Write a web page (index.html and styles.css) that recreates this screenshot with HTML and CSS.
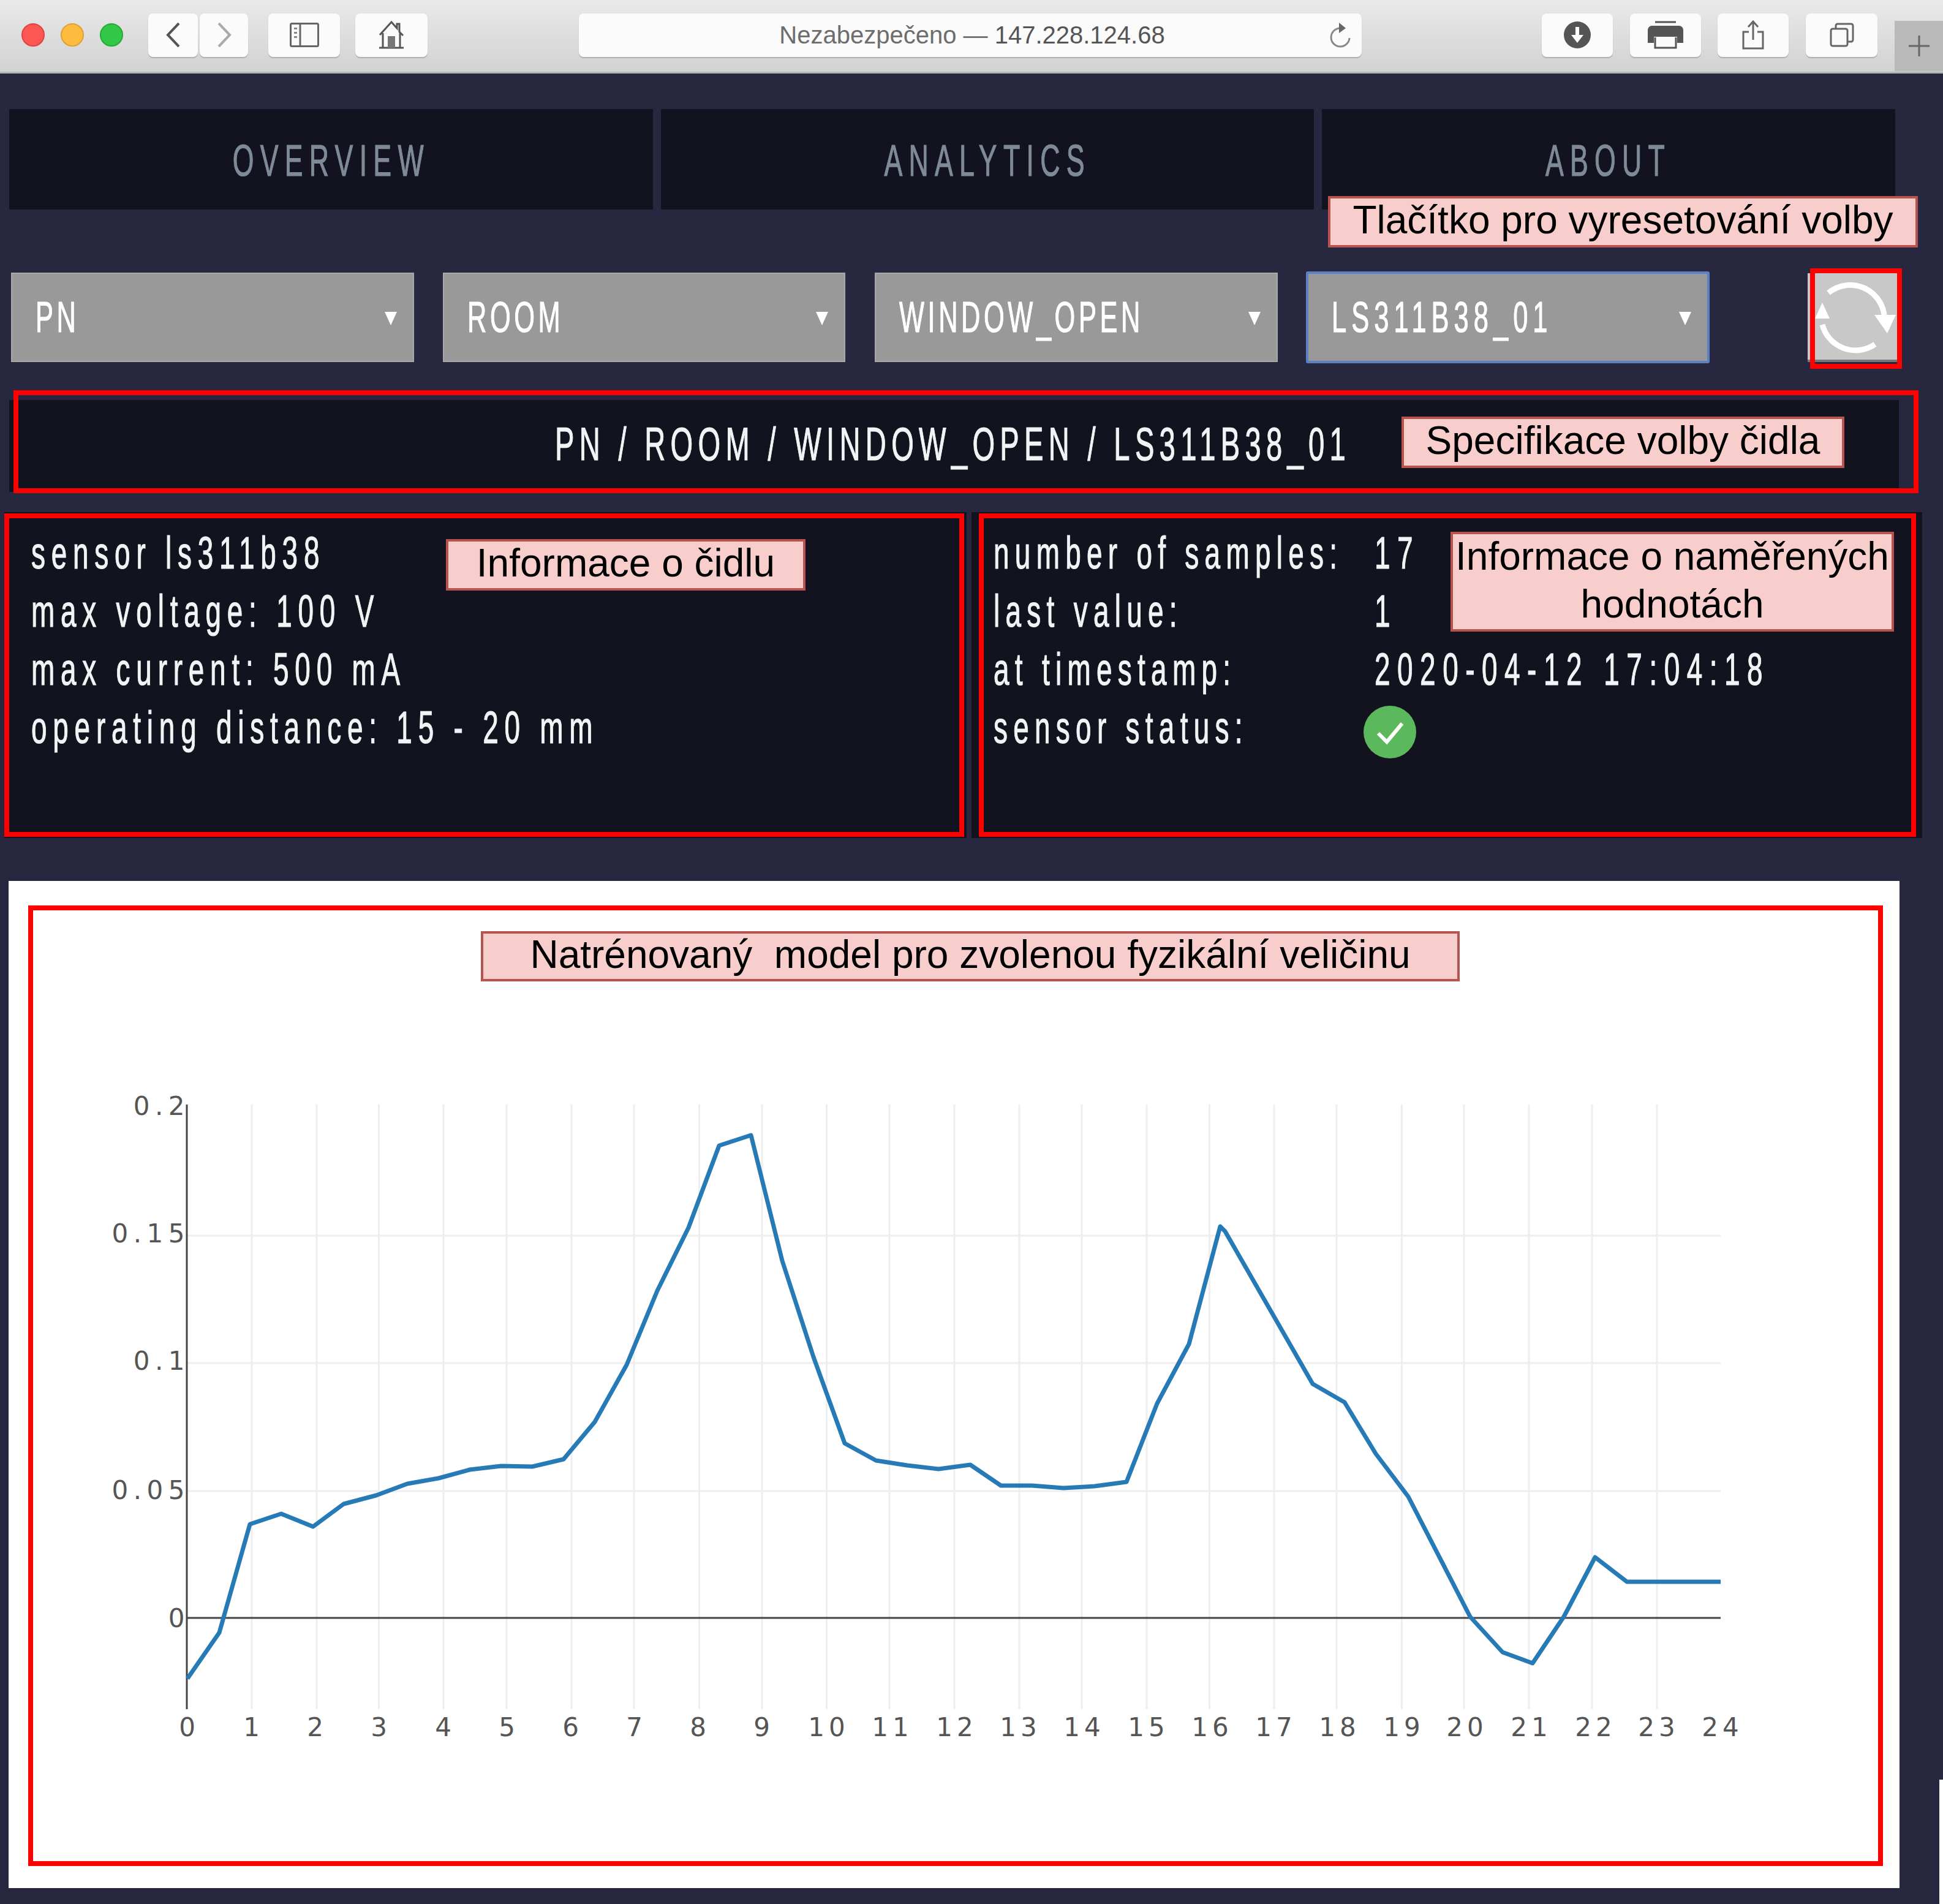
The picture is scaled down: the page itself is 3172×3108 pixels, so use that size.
FILE: index.html
```html
<!DOCTYPE html>
<html lang="cs">
<head>
  <meta charset="UTF-8">
  <title>Nezabezpečeno — 147.228.124.68</title>
  <link rel="stylesheet" href="styles.css">
</head>
<body>
  <!-- safari toolbar -->
  <div class="bar">
    <span class="light red"></span>
    <span class="light yellow"></span>
    <span class="light green"></span>
    <div class="btn b-back">
      <svg width="24" height="40" viewBox="0 0 24 40"><path d="M21 1 3 20l18 19" fill="none" stroke="#555" stroke-width="4"/></svg>
    </div>
    <div class="btn b-forward">
      <svg width="24" height="40" viewBox="0 0 24 40"><path d="M3 1l18 19L3 39" fill="none" stroke="#aaa" stroke-width="4"/></svg>
    </div>
    <div class="btn b-side">
      <svg width="48" height="40" viewBox="0 0 48 40"><g fill="none" stroke="#666" stroke-width="3"><rect x="1.5" y="1.5" width="45" height="37" rx="2"/><path d="M17 2v36"/></g><path d="M7 8h5v3H7zM7 15h5v3H7zM7 22h5v3H7z" fill="#888"/></svg>
    </div>
    <div class="btn b-home">
      <svg width="44" height="46" viewBox="0 0 44 46"><path d="M3 23 22 2l9 10V5h4v13l6 6M8 20v24M36 20v24M2 44h40" fill="none" stroke="#555" stroke-width="3"/><rect x="16" y="25" width="12" height="19" fill="#777"/></svg>
    </div>
    <div class="btn url">
      <span class="url-text">Nezabezpečeno — <b>147.228.124.68</b></span>
      <svg class="reload" width="36" height="44" viewBox="0 0 36 44"><path d="M19 10a15 15 0 1 0 15 16" fill="none" stroke="#888" stroke-width="3"/><path d="M17 1l11 9-11 8z" fill="#666"/></svg>
    </div>
    <div class="btn b-down">
      <svg width="46" height="46" viewBox="0 0 46 46"><circle cx="23" cy="23" r="22" fill="#555"/><path d="M20 10h6v13h7L23 36 13 23h7z" fill="#fff"/></svg>
    </div>
    <div class="btn b-print">
      <svg width="60" height="46" viewBox="0 0 60 46"><path d="M13 2h34" stroke="#555" stroke-width="3"/><path d="M8 8h44a7 7 0 0 1 7 7v21H49V26H11v10H1V15a7 7 0 0 1 7-7z" fill="#555"/><path d="M13 27v17h34V27" fill="none" stroke="#555" stroke-width="3"/></svg>
    </div>
    <div class="btn b-share">
      <svg width="36" height="48" viewBox="0 0 36 48"><path d="M11 19H2v27h32V19h-9M18 32V3M10 11l8-9 8 9" fill="none" stroke="#666" stroke-width="3"/></svg>
    </div>
    <div class="btn b-tabs">
      <svg width="40" height="40" viewBox="0 0 40 40"><g fill="none" stroke="#666" stroke-width="3"><rect x="2" y="10" width="27" height="28" rx="3"/><path d="M10 9V5a3 3 0 0 1 3-3h22a3 3 0 0 1 3 3v23a3 3 0 0 1-3 3h-5"/></g></svg>
    </div>
    <div class="plus">
      <svg width="38" height="38" viewBox="0 0 38 38"><path d="M19 2v34M2 19h34" stroke="#666" stroke-width="3"/></svg>
    </div>
  </div>

  <!-- menu -->
  <div class="tabs">
    <div class="tab tab1"><span class="cond">OVERVIEW</span></div>
    <div class="tab tab2"><span class="cond">ANALYTICS</span></div>
    <div class="tab tab3"><span class="cond">ABOUT</span></div>
    <div class="note note-reset">Tlačítko pro vyresetování volby</div>
  </div>

  <!-- filters -->
  <div class="filters">
    <div class="select s1"><span class="cond">PN</span><i class="arrow"></i></div>
    <div class="select s2"><span class="cond">ROOM</span><i class="arrow"></i></div>
    <div class="select s3"><span class="cond">WINDOW_OPEN</span><i class="arrow"></i></div>
    <div class="select s4 current"><span class="cond">LS311B38_01</span><i class="arrow"></i></div>
    <div class="reset">
      <svg width="147" height="145" viewBox="0 0 147 145">
        <g fill="none" stroke="#fff" stroke-width="9">
          <path d="M34 32a56 56 0 0 1 91 36"/>
          <path d="M24 84a56 56 0 0 0 86 32"/>
        </g>
        <path d="M109 68h35l-14 30zM12 74h24L24 48z" fill="#fff"/>
      </svg>
    </div>
    <div class="mark mark-reset"></div>
  </div>

  <!-- selected path -->
  <div class="spec">
    <span class="cond">PN / ROOM / WINDOW_OPEN / LS311B38_01</span>
    <div class="mark mark-spec"></div>
    <div class="note note-spec">Specifikace volby čidla</div>
  </div>

  <!-- info -->
  <div class="panels">
    <div class="panel panel-left">
      <div class="row"><span class="cond">sensor ls311b38</span></div>
      <div class="row"><span class="cond">max voltage: 100 V</span></div>
      <div class="row"><span class="cond">max current: 500 mA</span></div>
      <div class="row"><span class="cond">operating distance: 15 - 20 mm</span></div>
      <div class="mark mark-left"></div>
      <div class="note note-left">Informace o čidlu</div>
    </div>
    <div class="panel panel-right">
      <div class="row"><span class="key"><span class="cond">number of samples:</span></span><span class="cond val">17</span></div>
      <div class="row"><span class="key"><span class="cond">last value:</span></span><span class="cond val">1</span></div>
      <div class="row"><span class="key"><span class="cond">at timestamp:</span></span><span class="cond val">2020-04-12 17:04:18</span></div>
      <div class="row">
        <span class="key"><span class="cond">sensor status:</span></span>
        <svg class="ok" width="86" height="86" viewBox="0 0 86 86"><circle cx="43" cy="43" r="43" fill="#5cb85c"/><path d="M24 45l14 14 25-30" fill="none" stroke="#fff" stroke-width="6"/></svg>
      </div>
      <div class="mark mark-right"></div>
      <div class="note note-right">Informace o naměřených hodnotách</div>
    </div>
  </div>

  <!-- chart -->
  <div class="chart">
    <svg class="plot" width="3087" height="1644" viewBox="14 1438 3087 1644">
      <path class="grid" d="M411 1803V2790M517 1803V2790M618.5 1803V2790M724 1803V2790M827 1803V2790M933 1803V2790M1035 1803V2790M1141.5 1803V2790M1244 1803V2790M1349.5 1803V2790M1452 1803V2790M1558 1803V2790M1664 1803V2790M1766 1803V2790M1872 1803V2790M1974.5 1803V2790M2080 1803V2790M2182 1803V2790M2288.5 1803V2790M2390 1803V2790M2496 1803V2790M2599 1803V2790M2705 1803V2790"/>
      <path class="grid" d="M305 2017H2809M305 2225H2809M305 2434H2809"/>
      <path class="axis" d="M305 1803V2790M305 2641H2809"/>
      <polyline class="line" points="306,2740 358,2665 408,2488 459,2471 511,2492 561,2455 614,2441 665,2422 716,2413 767,2399 818,2393 869,2394 920,2382 971,2321 1023,2228 1073,2107 1124,2004 1174,1870 1226,1853 1277,2058 1328,2215 1379,2356 1430,2384 1481,2392 1532,2398 1584,2391 1634,2425 1685,2425 1736,2429 1787,2426 1839,2419 1889,2291 1941,2194 1992,2002 2000,2010 2143,2259 2195,2289 2246,2373 2299,2443 2400,2639 2453,2697 2502,2715 2553,2639 2604,2542 2656,2582 2809,2582"/>
      <g class="ylabels">
        <text x="310" y="1820">0.2</text>
        <text x="310" y="2028">0.15</text>
        <text x="310" y="2236">0.1</text>
        <text x="310" y="2447">0.05</text>
        <text x="310" y="2656">0</text>
      </g>
      <g class="xlabels">
        <text x="309" y="2834">0</text>
        <text x="414" y="2834">1</text>
        <text x="518" y="2834">2</text>
        <text x="622" y="2834">3</text>
        <text x="727" y="2834">4</text>
        <text x="831" y="2834">5</text>
        <text x="935" y="2834">6</text>
        <text x="1039" y="2834">7</text>
        <text x="1143" y="2834">8</text>
        <text x="1247" y="2834">9</text>
        <text x="1353" y="2834">10</text>
        <text x="1457" y="2834">11</text>
        <text x="1562" y="2834">12</text>
        <text x="1666" y="2834">13</text>
        <text x="1770" y="2834">14</text>
        <text x="1875" y="2834">15</text>
        <text x="1979" y="2834">16</text>
        <text x="2083" y="2834">17</text>
        <text x="2187" y="2834">18</text>
        <text x="2292" y="2834">19</text>
        <text x="2395" y="2834">20</text>
        <text x="2500" y="2834">21</text>
        <text x="2605" y="2834">22</text>
        <text x="2708" y="2834">23</text>
        <text x="2812" y="2834">24</text>
      </g>
    </svg>
    <div class="mark mark-chart"></div>
    <div class="note note-chart">Natrénovaný  model pro zvolenou fyzikální veličinu</div>
  </div>
  <div class="corner"></div>
</body>
</html>
```

FILE: styles.css
```css
*{
  margin: 0;
  padding: 0;
  box-sizing: border-box;
}
body{
  width: 3172px;
  height: 3108px;
  overflow: hidden;
  position: relative;
  background-color: #27273f;
  font-family: "Liberation Sans", Arial, sans-serif;
}

/* toolbar */
.bar{
  height: 120px;
  padding: 0 0 3px 35px;
  display: flex;
  align-items: center;
  background: linear-gradient(#e9e9e9, #d2d2d2);
  border-bottom: 3px solid #b4b4b8;
}
.light{
  width: 38px;
  height: 38px;
  margin-right: 26px;
  border-radius: 50%;
}
.light.red{ background-color: #fc5753; border: 2px solid #e0443e; }
.light.yellow{ background-color: #fdbc40; border: 2px solid #dea034; }
.light.green{ background-color: #33c748; border: 2px solid #27aa35; }
.light.green{ margin-right: 0; }
.btn{
  height: 71px;
  display: flex;
  align-items: center;
  justify-content: center;
  background-color: #fbfbfb;
  border-radius: 8px;
  box-shadow: 0 2px 1px #b0b0b0;
}
.b-back{ width: 81px; margin-left: 41px; }
.b-forward{ width: 79px; margin-left: 3px; }
.b-side{ width: 117px; margin-left: 33px; }
.b-home{ width: 118px; margin-left: 25px; }
.url{
  width: 1278px;
  margin-left: 247px;
  position: relative;
}
.url-text{
  font-size: 40px;
  color: #6d6d6d;
  margin-left: 6px;
}
.url-text b{
  font-weight: normal;
  color: #555;
}
.reload{
  position: absolute;
  right: 18px;
  top: 14px;
}
.b-down{ width: 116px; margin-left: 294px; }
.b-print{ width: 116px; margin-left: 28px; }
.b-share{ width: 116px; margin-left: 27px; }
.b-tabs{ width: 117px; margin-left: 28px; }
.plus{
  width: 79px;
  height: 82px;
  margin-left: 28px;
  margin-top: 35px;
  display: flex;
  align-items: center;
  justify-content: center;
  background-color: #b9b9b9;
}

/* squeezed text, the dashboard font is a tall condensed one */
.cond{
  display: inline-block;
  white-space: pre;
  transform: scaleX(.62);
  transform-origin: left center;
  font-size: 74px;
  letter-spacing: 15.8px;
  color: #f1f3f5;
  -webkit-text-stroke: 1.2px currentColor;
}
.panel-right .cond{
  letter-spacing: 15px;
}
.panel-right .val{
  letter-spacing: 18.6px;
}

/* menu */
.tabs{
  height: 164px;
  margin-top: 58px;
  padding-left: 15px;
  display: flex;
  gap: 13px;
  position: relative;
}
.tab{
  padding-top: 3px;
  display: flex;
  align-items: center;
  justify-content: center;
  background-color: #131320;
}
.tab .cond{
  font-size: 72px;
  letter-spacing: 16.6px;
  color: #7f8a97;
  transform-origin: center;
}
.tab1{ width: 1051px; }
.tab2{ width: 1066px; }
.tab3{ width: 936px; }

/* filters */
.filters{
  height: 150px;
  margin-top: 101px;
  padding-left: 18px;
  display: flex;
  align-items: center;
  position: relative;
}
.select{
  height: 146px;
  padding-left: 38px;
  display: flex;
  align-items: center;
  position: relative;
  background-color: #999;
  border: 2px solid #a8a8a8;
}
.select .cond{
  font-size: 70px;
  letter-spacing: 9px;
  color: #fff;
}
.select.s4 .cond{
  letter-spacing: 13px;
}
.s1{ width: 658px; }
.s2{ width: 657px; margin-left: 47px; }
.s3{ width: 658px; margin-left: 48px; }
.s4{ width: 659px; margin-left: 46px; }
.current{
  height: 150px;
  border: 4px solid #5b80c4;
  border-radius: 3px;
}
.arrow{
  position: absolute;
  right: 26px;
  top: 62px;
  border-top: 22px solid #fff;
  border-left: 10px solid transparent;
  border-right: 10px solid transparent;
}
.reset{
  width: 147px;
  height: 145px;
  margin-left: 160px;
  background-color: #c8c8c8;
  border-bottom: 4px solid #777;
}
.reset svg{
  display: block;
}

/* selected path */
.spec{
  width: 3085px;
  height: 150px;
  margin: 60px 0 0 15px;
  padding: 0 0 8px 891px;
  display: flex;
  align-items: center;
  position: relative;
  background-color: #131320;
}
.spec .cond{
  font-size: 76px;
  letter-spacing: 13.4px;
}

/* info */
.panels{
  height: 532px;
  margin-top: 33px;
  padding-left: 7px;
  display: flex;
  gap: 8px;
}
.panel{
  padding-top: 19px;
  position: relative;
  background-color: #131320;
}
.panel-left{
  width: 1571px;
  padding-left: 44px;
}
.panel-right{
  width: 1552px;
  padding-left: 36px;
}
.row{
  height: 95px;
  display: flex;
  align-items: center;
}
.key{
  width: 622px;
  display: block;
}
.ok{
  margin: 14px 0 0 -18px;
}

/* chart */
.chart{
  width: 3087px;
  height: 1644px;
  margin: 70px 0 0 14px;
  position: relative;
  background-color: #fff;
}
.plot{
  display: block;
}
.grid{
  fill: none;
  stroke: #eee;
  stroke-width: 3;
}
.axis{
  fill: none;
  stroke: #444;
  stroke-width: 3;
}
.line{
  fill: none;
  stroke: #267ab6;
  stroke-width: 7;
  stroke-linejoin: round;
}
.ylabels text,
.xlabels text{
  font-family: "DejaVu Sans", sans-serif;
  font-size: 42px;
  letter-spacing: 7px;
  fill: #555;
}
.ylabels text{
  text-anchor: end;
  letter-spacing: 8.5px;
}
.xlabels text{ text-anchor: middle; }
.corner{
  position: absolute;
  right: 0;
  bottom: 0;
  width: 6px;
  height: 203px;
  background-color: #fff;
}

/* red frames of the annotated figure */
.mark{
  position: absolute;
  border: 8px solid #f00;
}
.mark-reset{ left: 2955px; top: -5px; width: 150px; height: 164px; }
.mark-spec{ left: 7px; top: -16px; width: 3110px; height: 168px; }
.mark-left{ left: 0; top: 2px; width: 1567px; height: 528px; }
.mark-right{ left: 12px; top: 2px; width: 1530px; height: 528px; }
.mark-chart{ left: 32px; top: 40px; width: 3028px; height: 1568px; }

/* pink labels of the annotated figure */
.note{
  position: absolute;
  padding-bottom: 6px;
  display: flex;
  align-items: center;
  justify-content: center;
  text-align: center;
  white-space: pre-wrap;
  font-size: 64px;
  line-height: 78px;
  color: #000;
  background-color: #f8cecc;
  border: 4px solid #b85450;
}
.note-reset{ left: 2168px; top: 142px; width: 963px; height: 84px; }
.note-spec{ left: 2273px; top: 27px; width: 723px; height: 84px; }
.note-left{ left: 721px; top: 44px; width: 587px; height: 84px; }
.note-right{ left: 782px; top: 32px; width: 724px; height: 163px; }
.note-chart{ left: 771px; top: 82px; width: 1598px; height: 82px; }
```
